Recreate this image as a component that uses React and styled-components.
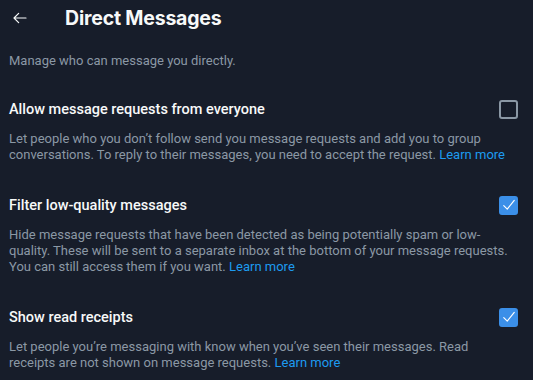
import React from 'react';
import styled, { createGlobalStyle } from 'styled-components';

const GlobalStyle = createGlobalStyle`
  html, body {
    margin: 0;
    background: #171d2a;
  }
  body {
    font-family: Roboto, "Noto Sans", sans-serif;
    color: #f7f9f9;
  }
`;

const Page = styled.div`
  width: 533px;
  height: 380px;
  overflow: hidden;
  background: #171d2a;
`;

const Header = styled.header`
  display: flex;
  align-items: center;
  height: 36px;
  padding: 0 0 0 11px;
`;

const BackButton = styled.button`
  display: flex;
  align-items: center;
  justify-content: center;
  width: 18px;
  height: 18px;
  margin-right: 36px;
  padding: 0;
  border: none;
  background: none;
  color: #f7f9f9;
`;

const Title = styled.h1`
  margin: 0;
  font-family: Inter, Roboto, sans-serif;
  font-size: 19.5px;
  font-weight: 700;
  letter-spacing: -0.2px;
`;

const Intro = styled.p`
  margin: 17px 0 0;
  padding: 0 9px;
  font-size: 13px;
  color: #8b98a5;
`;

const Section = styled.section`
  padding: 0 15px 0 9px;
  margin-top: ${(p) => p.$top}px;
`;

const Row = styled.label`
  display: flex;
  align-items: center;
  justify-content: space-between;
  height: 20px;
`;

const Label = styled.span`
  font-size: 14.5px;
  font-weight: 500;
`;

const Box = styled.span`
  display: flex;
  align-items: center;
  justify-content: center;
  box-sizing: border-box;
  width: 19px;
  height: 19px;
  border-radius: 3px;
  border: 2px solid ${(p) => (p.$checked ? '#3b8fe8' : '#8b98a5')};
  background: ${(p) => (p.$checked ? '#3b8fe8' : 'transparent')};
`;

const Desc = styled.p`
  max-width: 500px;
  margin: 12px 0 0;
  font-size: 13px;
  line-height: 16px;
  color: #8b98a5;
`;

const LearnMore = styled.a`
  color: #1d9bf0;
  text-decoration: none;
`;

const Check = ({ checked }) => (
  <Box $checked={checked}>
    {checked && (
      <svg width="14" height="14" viewBox="0 0 24 24" fill="none" stroke="#fff" strokeWidth="2" strokeLinecap="round" strokeLinejoin="round">
        <path d="M3 13l6 6L21 4" />
      </svg>
    )}
  </Box>
);

const settings = [
  {
    top: 31,
    label: 'Allow message requests from everyone',
    checked: false,
    desc: "Let people who you don\u2019t follow send you message requests and add you to group conversations. To reply to their messages, you need to accept the request.",
  },
  {
    top: 32,
    label: 'Filter low-quality messages',
    checked: true,
    desc: 'Hide message requests that have been detected as being potentially spam or low-quality. These will be sent to a separate inbox at the bottom of your message requests. You can still access them if you want.',
  },
  {
    top: 32,
    label: 'Show read receipts',
    checked: true,
    desc: 'Let people you\u2019re messaging with know when you\u2019ve seen their messages. Read receipts are not shown on message requests.',
  },
];

export default function App() {
  return (
    <Page>
      <GlobalStyle />
      <Header>
        <BackButton aria-label="Back">
          <svg width="16" height="16" viewBox="0 0 24 24" fill="none" stroke="currentColor" strokeWidth="1.8" strokeLinecap="round" strokeLinejoin="round">
            <path d="M21 12H3M10 5l-7 7 7 7" />
          </svg>
        </BackButton>
        <Title>Direct Messages</Title>
      </Header>
      <Intro>Manage who can message you directly.</Intro>
      {settings.map((s) => (
        <Section key={s.label} $top={s.top}>
          <Row>
            <Label>{s.label}</Label>
            <Check checked={s.checked} />
          </Row>
          <Desc>
            {s.desc} <LearnMore href="#">Learn more</LearnMore>
          </Desc>
        </Section>
      ))}
    </Page>
  );
}
